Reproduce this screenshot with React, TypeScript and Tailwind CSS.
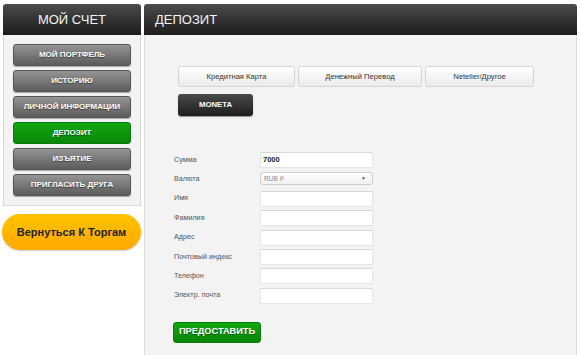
import React from "react";

const font = { fontFamily: '"Liberation Sans", Arial, sans-serif' };

function SideBtn({ label, active }: { label: string; active?: boolean }) {
  return (
    <div
      className={
        "h-[22px] rounded-[3px] flex items-center justify-center text-[8px] font-bold text-white uppercase [text-shadow:0_1px_1px_rgba(0,0,0,0.5)] " +
        (active
          ? "bg-gradient-to-b from-[#10a810] to-[#0a860a] border border-[#0a7a0a]"
          : "bg-gradient-to-b from-[#959595] to-[#5c5c5c] border border-[#555] shadow-[0_1px_1px_rgba(0,0,0,0.3)]")
      }
    >
      {label}
    </div>
  );
}

function Tab({ label, w }: { label: string; w: string }) {
  return (
    <div
      className={
        w +
        " h-[21px] rounded-[3px] border border-[#d4d4d4] bg-gradient-to-b from-white to-[#ebebeb] flex items-center justify-center text-[7.6px] text-[#333]"
      }
    >
      {label}
    </div>
  );
}

function Row({ label, children }: { label: string; children?: React.ReactNode }) {
  return (
    <div className="flex items-center h-[16px]">
      <div className="w-[86px] text-[7.2px] text-[#555]">{label}</div>
      {children ?? (
        <div className="w-[113px] h-[16px] bg-white border border-[#e6e6e6] border-t-[#d8d8d8]" />
      )}
    </div>
  );
}

export default function App() {
  return (
    <div style={font} className="w-[580px] h-[355px] bg-white flex pt-[4px] pl-[3px] gap-[3px] overflow-hidden">
      <div className="w-[138px] flex flex-col">
        <div className="h-[31px] rounded-t-[3px] bg-gradient-to-b from-[#4c4c4c] to-[#1c1c1c] flex items-center justify-center text-[13px] text-[#f4f4f4]">
          МОЙ СЧЕТ
        </div>
        <div className="border border-t-0 border-[#d8d8d8] bg-[#f3f3f3] pt-[9px] pb-[9px] px-[9px] flex flex-col gap-[4px]">
          <SideBtn label="Мой портфель" />
          <SideBtn label="Историю" />
          <SideBtn label="Личной информации" />
          <SideBtn label="Депозит" active />
          <SideBtn label="Изъятие" />
          <SideBtn label="Пригласить друга" />
        </div>
        <div className="mt-[8px] -ml-[1px] h-[36px] rounded-full bg-gradient-to-b from-[#ffc300] to-[#ffa800] shadow-[0_1px_2px_rgba(0,0,0,0.2)] flex items-center justify-center text-[11px] font-bold text-[#222]">
          Вернуться К Торгам
        </div>
      </div>
      <div className="w-[433px] flex flex-col">
        <div className="h-[31px] rounded-t-[3px] bg-gradient-to-b from-[#4c4c4c] to-[#1c1c1c] flex items-center pl-[11px] text-[13px] text-[#f4f4f4]">
          ДЕПОЗИТ
        </div>
        <div className="flex-1 border-x border-[#dcdcdc] bg-[#f3f3f3] pt-[31px] pl-[33px]">
          <div className="flex gap-[3px]">
            <Tab label="Кредитная Карта" w="w-[117px]" />
            <Tab label="Денежный Перевод" w="w-[124px]" />
            <Tab label="Neteller/Другое" w="w-[109px]" />
          </div>
          <div className="mt-[7px] w-[75px] h-[22px] rounded-[3px] bg-gradient-to-b from-[#4a4a4a] to-[#1e1e1e] shadow-[0_1px_1px_rgba(0,0,0,0.4)] flex items-center justify-center text-[7.8px] font-bold text-white">
            MONETA
          </div>
          <div className="mt-[36px] -ml-[4px] flex flex-col gap-[3.4px]">
            <Row label="Сумма">
              <div className="w-[113px] h-[16px] bg-white border border-[#e6e6e6] border-t-[#d8d8d8] flex items-center pl-[2px] text-[7.5px] font-bold text-[#222]">
                7000
              </div>
            </Row>
            <Row label="Валюта">
              <div className="w-[113px] h-[13px] mb-[2px] bg-gradient-to-b from-white to-[#f0f0f0] border border-[#cfcfcf] rounded-[3px] flex items-center justify-between pl-[3px] pr-[6px] text-[6.5px] text-[#888]">
                <span>RUB ₽</span>
                <span className="text-[5px] text-[#666]">▼</span>
              </div>
            </Row>
            <Row label="Имя" />
            <Row label="Фамилия" />
            <Row label="Адрес" />
            <Row label="Почтовый индекс" />
            <Row label="Телефон" />
            <Row label="Электр. почта" />
          </div>
          <div className="mt-[18px] -ml-[5px] w-[88px] h-[21px] rounded-[3px] bg-gradient-to-b from-[#12a812] to-[#0a840a] border border-[#0a7a0a] flex items-center justify-center text-[9.2px] font-bold text-white [text-shadow:0_1px_1px_rgba(0,0,0,0.4)]">
            ПРЕДОСТАВИТЬ
          </div>
        </div>
      </div>
    </div>
  );
}
